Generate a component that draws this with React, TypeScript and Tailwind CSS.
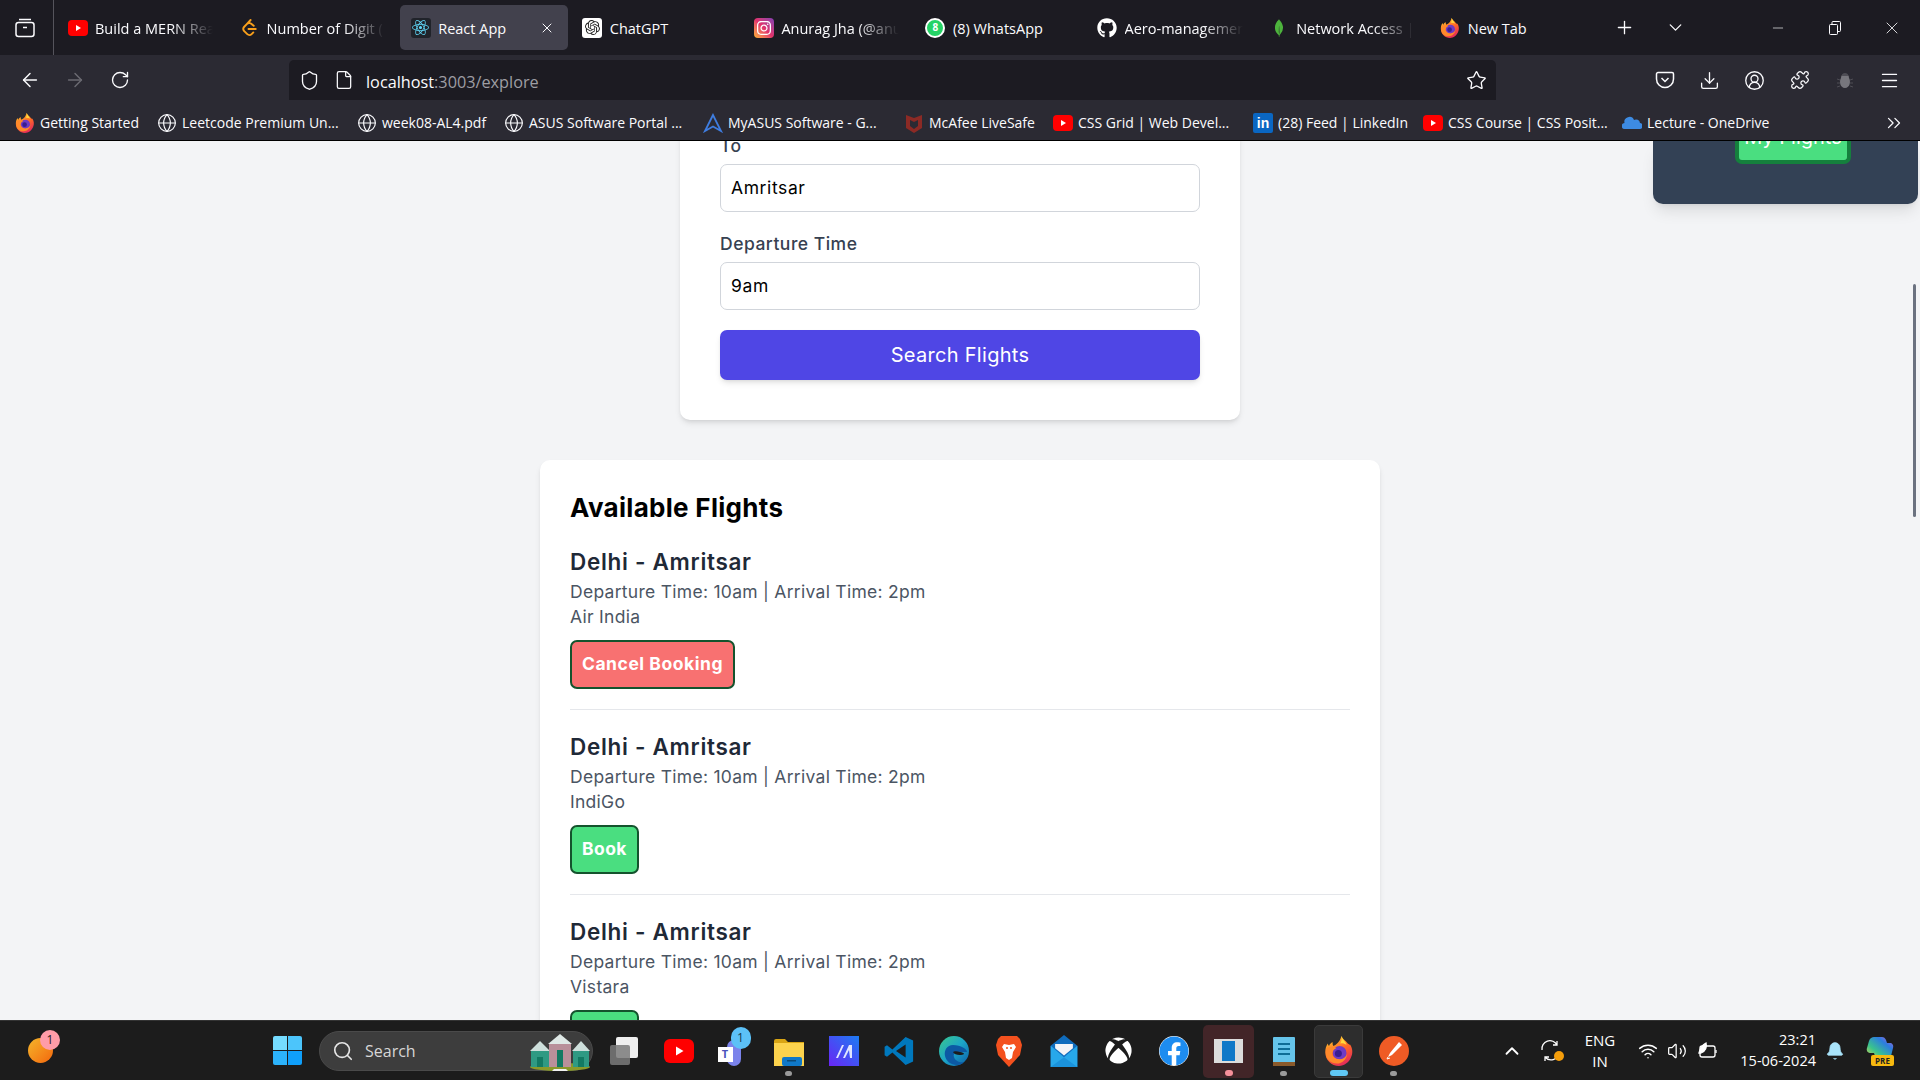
import React from "react";
import { ArrowLeft, ArrowRight, RotateCw, Shield, File, Star, Download, Menu, X, Plus, ChevronDown, Minus, ChevronsRight, Search, ChevronUp, Wifi, Volume2, Bell, Globe, CircleUserRound, Puzzle } from "lucide-react";
import { SiReact, SiOpenai, SiLeetcode, SiMongodb } from "react-icons/si";
import { FaGithub, FaInstagram, FaXbox, FaFacebook } from "react-icons/fa";

const Youtube = ({ w = 20, h = 16 }: { w?: number; h?: number }) => (
  <svg width={w} height={h} viewBox="0 0 20 16"><rect width="20" height="16" rx="4" fill="#ff0000" /><path d="M8 5v6l5-3z" fill="#fff" /></svg>
);
const Firefox = ({ s = 20 }: { s?: number }) => (
  <svg width={s} height={s} viewBox="0 0 24 24">
    <defs>
      <linearGradient id="ffa" x1="0.2" y1="0" x2="0.7" y2="1"><stop offset="0" stopColor="#ffcb2d" /><stop offset="0.5" stopColor="#ff6a26" /><stop offset="1" stopColor="#e3265e" /></linearGradient>
    </defs>
    <path d="M14 0c1 3 3 3 5 6 1 .8 1.5 1 2 1 2 3 2 7 1 9-1.5 5-6 8-10 8-6 0-11-4.700-11-11 0-3 .7-5 2-7 .2 1 .6 1.500 1 2 .5-1.500 2-3 3-3-.2 1-.1 2 .5 3 2-1 5-2.500 6.500-8z" fill="url(#ffa)" />
    <circle cx="12.500" cy="13.500" r="5.500" fill="#6e3bc4" />
    <circle cx="11.500" cy="14" r="2.800" fill="#3a1d91" />
    <path d="M14 0c1 3 3 4 4 7-1.500-1-3.500-1.500-5-1 .8-1.500 1.500-3.500 1-6z" fill="#ffd93b" />
    <path d="M2 10c2-2 5-1 8-.5-2 1-3 2-3.500 4 0 2.500 2 5 6 5 2.500 0 5-1.500 6-4-.5 4-4 7.500-8 7.500-5 0-9-3.500-9-8 0-1.500.2-3 .5-4z" fill="#ff8a2b" />
  </svg>
);
const Glob = () => <Globe size={20} strokeWidth={1.4} className="text-[#fbfbfe]" />;

const Tab = ({ icon, label, active, fade }: { icon: React.ReactNode; label: string; active?: boolean; fade?: boolean }) => (
  <div className={active ? "w-[167.600px] h-[45px] rounded-[5px] bg-[#42414d] flex items-center pl-[10px] pr-[10px] gap-[7px]" : "w-[167.600px] h-[45px] flex items-center pl-[10px] gap-[7px]"}>
    <span className="w-[21px] h-5 flex items-center justify-center shrink-0">{icon}</span>
    <span className={fade ? "w-[118px] mt-[2px] overflow-hidden whitespace-nowrap text-[14.500px] text-[#fbfbfe] [mask-image:linear-gradient(to_right,#000_65%,transparent_100%)]" : "mt-[2px] whitespace-nowrap text-[14.500px] text-[#fbfbfe]"}>{label}</span>
    {active && <X size={16} strokeWidth={1.5} className="ml-auto mr-[3px] text-[#fbfbfe]" />}
  </div>
);

const TabBar = () => (
  <div className="h-[55px] bg-[#1c1b22] flex shrink-0">
    <div className="w-[54px] h-full border-r border-[#55545c] flex items-center justify-center pr-[4px] pt-[1px]">
      <svg width="20" height="20" viewBox="0 0 20 20" fill="none" stroke="#fbfbfe" strokeWidth="1.500"><path d="M4 1.500h12" /><rect x="1" y="4.500" width="18" height="14" rx="2.500" /><path d="M8 9.500h4" /></svg>
    </div>
    <div className="flex gap-1 pt-[5px] pl-[3px]">
      <Tab icon={<Youtube />} label="Build a MERN Real" fade />
      <Tab icon={<SiLeetcode size={17} className="text-[#f89f1b]" />} label="Number of Digit (" fade />
      <Tab icon={<span className="w-5 h-5 rounded-[3px] bg-[#20232a] flex items-center justify-center"><SiReact size={17} className="text-[#61dafb]" /></span>} label="React App" active />
      <Tab icon={<span className="w-5 h-5 rounded-[3px] bg-white flex items-center justify-center"><SiOpenai size={15} className="text-[#222]" /></span>} label="ChatGPT" />
      <Tab icon={<span className="w-5 h-5 rounded-[4px] bg-gradient-to-tr from-[#fdb022] via-[#e1306c] to-[#833ab4] flex items-center justify-center"><FaInstagram size={16} className="text-white" /></span>} label="Anurag Jha (@anurag" fade />
      <Tab icon={<span className="w-5 h-5 rounded-full bg-[#25d366] border-2 border-white flex items-center justify-center text-[10px] font-bold text-white">8</span>} label="(8) WhatsApp" />
      <Tab icon={<FaGithub size={20} className="text-white" />} label="Aero-management" fade />
      <Tab icon={<SiMongodb size={18} className="text-[#4db33d]" />} label="Network Access | Cloud" fade />
      <Tab icon={<Firefox />} label="New Tab" />
    </div>
    <div className="w-[54px] flex items-center justify-center text-[#fbfbfe]"><Plus size={21} strokeWidth={1.5} /></div>
    <div className="w-[48px] flex items-center justify-center text-[#fbfbfe]"><ChevronDown size={21} strokeWidth={1.5} /></div>
    <div className="ml-auto flex text-[#fbfbfe]">
      <div className="w-[57px] flex items-center justify-center"><Minus size={16} strokeWidth={1} /></div>
      <div className="w-[57px] flex items-center justify-center">
        <svg width="12" height="14" viewBox="0 0 12 14" fill="none" stroke="#fbfbfe" strokeWidth="1"><rect x="0.500" y="3.500" width="8" height="10" rx="1" /><path d="M3 3V1.500a1 1 0 0 1 1-1h6.500a1 1 0 0 1 1 1v8a1 1 0 0 1-1 1H8.500" /></svg>
      </div>
      <div className="w-[57px] flex items-center justify-center"><X size={20} strokeWidth={1} /></div>
    </div>
  </div>
);

const NavBtn = ({ children }: { children: React.ReactNode }) => (
  <div className="w-[45px] h-10 flex items-center justify-center text-[#fbfbfe]">{children}</div>
);

const NavBar = () => (
  <div className="h-[45px] bg-[#2b2a33] flex pt-[5px] pl-[7px] shrink-0">
    <NavBtn><ArrowLeft size={22} strokeWidth={1.6} /></NavBtn>
    <NavBtn><ArrowRight size={22} strokeWidth={1.6} className="text-[#6b6a72]" /></NavBtn>
    <NavBtn><RotateCw size={20} strokeWidth={1.6} /></NavBtn>
    <div className="ml-[147px] w-[1207px] h-10 rounded-t-[5px] bg-[#1c1b22] flex items-center text-[#fbfbfe]">
      <Shield size={21} strokeWidth={1.5} className="ml-[10px]" />
      <File size={20} strokeWidth={1.5} className="ml-[14px]" />
      <span className="ml-[12px] text-[16.250px] leading-none mt-[4px]">localhost<span className="text-[#9e9ea4]">:3003/explore</span></span>
      <Star size={21} strokeWidth={1.5} className="ml-auto mr-[9px]" />
    </div>
    <div className="ml-[146px] flex">
      <NavBtn>
        <svg width="20" height="20" viewBox="0 0 20 20" fill="none" stroke="#fbfbfe" strokeWidth="1.500"><path d="M3 2.500h14a1.500 1.500 0 0 1 1.500 1.500v5a8.500 8.500 0 0 1-17 0V4A1.500 1.500 0 0 1 3 2.500z" /><path d="M6.500 8l3.500 3.500L13.500 8" /></svg>
      </NavBtn>
      <NavBtn><Download size={21} strokeWidth={1.5} /></NavBtn>
      <NavBtn><CircleUserRound size={21} strokeWidth={1.5} /></NavBtn>
      <NavBtn><Puzzle size={20} strokeWidth={1.5} /></NavBtn>
      <NavBtn>
        <svg width="18" height="18" viewBox="0 0 18 18"><path d="M5 7a4 4 0 0 1 8 0c2 3 1 10-4 10S3 10 5 7z" fill="#77767d" /><path d="M6 5a3 3 0 0 1 6 0z" fill="#4e4d55" /><path d="M1 8l3 1M1 12h3M1 16l3-1M17 8l-3 1M17 12h-3M17 16l-3-1" stroke="#4e4d55" strokeWidth="1" /></svg>
      </NavBtn>
      <NavBtn><Menu size={21} strokeWidth={1.5} /></NavBtn>
    </div>
  </div>
);

const BM = ({ icon, label, w }: { icon: React.ReactNode; label: string; w: string }) => (
  <div className={`${w} flex items-center gap-[5px] whitespace-nowrap`}>
    <span className="w-5 h-5 flex items-center justify-center shrink-0">{icon}</span>
    <span className="text-[14px] text-[#fbfbfe]">{label}</span>
  </div>
);

const Bookmarks = () => (
  <div className="h-[41px] bg-[#2b2a33] border-b border-black flex items-center pl-[15px] pt-[5px] shrink-0">
    <BM w="w-[142px]" icon={<Firefox />} label="Getting Started" />
    <BM w="w-[200px]" icon={<Glob />} label="Leetcode Premium Un..." />
    <BM w="w-[147px]" icon={<Glob />} label="week08-AL4.pdf" />
    <BM w="w-[199px]" icon={<Glob />} label="ASUS Software Portal ..." />
    <BM w="w-[201px]" icon={<svg width="20" height="20" viewBox="0 0 20 20" fill="none" stroke="#3f7de0" strokeWidth="1.800"><path d="M10 2L2 18l8-4.500L18 18z" /></svg>} label="MyASUS Software - G..." />
    <BM w="w-[149px]" icon={<svg width="18" height="20" viewBox="0 0 18 20"><path d="M1 2l8 3 8-3v13l-8 5-8-5z" fill="#8c2a25" /><path d="M5 7l4 2 4-2v6l-4 3-4-3z" fill="#2b2a33" /></svg>} label="McAfee LiveSafe" />
    <BM w="w-[200px]" icon={<Youtube />} label="CSS Grid | Web Devel..." />
    <BM w="w-[170px]" icon={<span className="w-5 h-5 flex items-center justify-center rounded-[2px] bg-[#0a66c2] text-white text-[14px] font-bold leading-none font-['Liberation_Sans']">in</span>} label="(28) Feed | LinkedIn" />
    <BM w="w-[199px]" icon={<Youtube />} label="CSS Course | CSS Posit..." />
    <BM w="w-[160px]" icon={<svg width="20" height="14" viewBox="0 0 20 14"><path d="M3 13a3 3 0 0 1-.500-6A5 5 0 0 1 12 4a4 4 0 0 1 6 3 3 3 0 0 1-1 6z" fill="#3d8be3" /></svg>} label="Lecture - OneDrive" />
    <div className="ml-auto mr-[6px] w-10 flex justify-center text-[#fbfbfe]"><ChevronsRight size={22} strokeWidth={1.4} /></div>
  </div>
);

const Field = ({ label, value }: { label: string; value: string }) => (
  <div className="mb-5">
    <div className="h-[25px] mb-[5px] text-[17.500px] leading-[25px] font-medium tracking-[0.5px] text-[#374151] -translate-y-px">{label}</div>
    <div className="h-12 rounded-[7px] border border-[#d1d5db] bg-white pl-[10px] flex items-center text-[17.500px] tracking-[0.6px] text-black">{value}</div>
  </div>
);

const Flight = ({ airline, booked, last }: { airline: string; booked?: boolean; last?: boolean }) => (
  <div className={last ? "" : "pb-5 mb-5 border-b border-[#e5e7eb]"}>
    <div className="text-[22.500px] leading-[35px] font-semibold tracking-[0.7px] text-[#1f2937] -translate-y-px">Delhi - Amritsar</div>
    <div className="text-[17.500px] leading-[25px] tracking-[0.28px] text-[#4b5563] -translate-y-px">Departure Time: 10am | Arrival Time: 2pm</div>
    <div className="text-[17.500px] leading-[25px] tracking-[0.28px] text-[#4b5563] -translate-y-px">{airline}</div>
    {booked ? (
      <div className="mt-[10px] w-[165px] h-[49px] rounded-[7px] border-2 border-[#14532d] bg-[#f87171] flex items-center justify-center text-[17.500px] font-bold tracking-[0.55px] text-white">Cancel Booking</div>
    ) : (
      <div className="mt-[10px] w-[69px] h-[49px] rounded-[7px] border-2 border-[#14532d] bg-[#4ade80] flex items-center justify-center text-[17.500px] font-bold tracking-[0.4px] text-white">Book</div>
    )}
  </div>
);

const Page = () => (
  <main className="relative flex-1 min-h-0 overflow-hidden bg-[#f3f4f6] font-['Inter',sans-serif]">
    <div className="flex flex-col items-center -mt-[7px]">
      <div className="w-[560px] bg-white rounded-b-[10px] shadow-md px-10 pb-10">
        <Field label="To" value="Amritsar" />
        <Field label="Departure Time" value="9am" />
        <div className="h-[50px] rounded-[7px] bg-[#4f46e5] shadow-md flex items-center justify-center text-[20px] tracking-[0.3px] text-white">Search Flights</div>
      </div>
      <div className="mt-10 w-[840px] bg-white rounded-[10px] shadow-md p-[30px]">
        <h2 className="text-[26px] leading-[35px] font-bold tracking-[0.3px] text-black mb-5">Available Flights</h2>
        <Flight airline="Air India" booked />
        <Flight airline="IndiGo" />
        <Flight airline="Vistara" last />
      </div>
    </div>
    <div className="absolute top-0 right-[2px] w-[265px] h-[63px] rounded-b-[10px] bg-[#334155] shadow-lg flex justify-end pr-[67px]">
      <div className="w-[116px] h-[23px] rounded-b-[7px] border-x-4 border-b-4 border-[#15803d] bg-[#4ade80] flex items-start justify-center overflow-hidden">
        <span className="text-[20px] leading-[26px] text-white -mt-[17px]">My Flights</span>
      </div>
    </div>
    <div className="absolute right-[4px] top-[143px] w-[3px] h-[233px] rounded-full bg-[#6b7280]" />
  </main>
);

const Slot = ({ children, dot, dotCls }: { children: React.ReactNode; dot?: boolean; dotCls?: string }) => (
  <div className="relative w-[55px] h-full flex items-center justify-center">
    {children}
    {dot && <span className={dotCls ?? "absolute bottom-[4px] w-[7px] h-[5px] rounded-full bg-[#9a9a9a]"} />}
  </div>
);

const Houses = () => (
  <svg width="64" height="40" viewBox="0 0 64 40">
    <ellipse cx="32" cy="36" rx="30" ry="4" fill="#8a9a2a" />
    {[[2, 10, 20], [20, 3, 24], [44, 10, 18]].map(([x, y, w], i) => (
      <g key={i}>
        <path d={`M${x} ${y + 10}L${x + w / 2} ${y}L${x + w} ${y + 10}z`} fill={i === 1 ? "#dfe9e6" : "#cfe0dc"} />
        <rect x={x + 1} y={y + 10} width={w - 2} height={36 - y - 10} fill={i === 1 ? "#b9909a" : "#2f9a83"} />
        <rect x={x + w / 2 - 3} y={y + 16} width="6" height={36 - y - 16} fill="#137a63" />
      </g>
    ))}
    <path d="M26 38h12l2 2H24z" fill="#f2f2f2" />
  </svg>
);

const Taskbar = () => (
  <div className="h-[60px] bg-[#1c1c1c] border-t border-[#333] flex items-center shrink-0 font-['Open_Sans',sans-serif] text-white">
    <div className="relative ml-[28px] w-[25px] h-[25px]">
      <div className="w-[25px] h-[25px] rounded-full bg-gradient-to-br from-[#f3b52a] to-[#f2650c]" />
      <span className="absolute -top-[8px] left-[12px] w-5 h-5 rounded-full bg-[#ff9ca8] text-[#222] text-[12px] flex items-center justify-center">1</span>
    </div>
    <div className="ml-[220px] w-[29px] h-[29px] grid grid-cols-2 gap-[1.500px]">
      <span className="rounded-tl-[2px] bg-[#75dcff]" /><span className="rounded-tr-[2px] bg-[#4cc5fb]" />
      <span className="rounded-bl-[2px] bg-[#2cb3fb]" /><span className="rounded-br-[2px] bg-[#0f9ffa]" />
    </div>
    <div className="ml-[17px] w-[274px] h-10 rounded-full bg-[#3d3d3d] border border-[#4a4a4a] flex items-center">
      <Search size={22} strokeWidth={1.8} className="ml-[12px] text-[#e6e6e6]" />
      <span className="ml-[11px] text-[16px] text-[#d6d6d6]">Search</span>
      <span className="ml-auto"><Houses /></span>
    </div>
    <div className="ml-[3px] flex h-full">
      <Slot>
        <div className="relative w-7 h-7">
          <span className="absolute right-0 top-0 w-[22px] h-[21px] rounded-[2px] bg-[#efefef]" />
          <span className="absolute left-0 bottom-0 w-[20px] h-[20px] rounded-[2px] bg-[#7a7a7a]/85" />
        </div>
      </Slot>
      <Slot><Youtube w={30} h={32} /></Slot>
      <Slot>
        <div className="relative w-[34px] h-[30px]">
          <span className="absolute left-[10px] top-[4px] w-[14px] h-[26px] rounded-full bg-[#7b83eb]" />
          <span className="absolute left-[1px] top-[11px] w-[15px] h-[15px] bg-white text-[#4b53bc] text-[11px] font-bold flex items-center justify-center">T</span>
          <span className="absolute -top-[9px] left-[14px] w-5 h-[22px] rounded-full bg-[#5cc1f7] text-[#173b52] text-[12px] flex items-center justify-center">1</span>
        </div>
      </Slot>
      <Slot dot>
        <svg width="30" height="30" viewBox="0 0 30 30"><path d="M0 5a2 2 0 0 1 2-2h9l3 3h16v3H0z" fill="#d9a514" /><rect y="7" width="30" height="23" fill="#fcd34d" /><rect x="8" y="21" width="20" height="9" rx="2" fill="#0f78c8" /><rect x="13" y="24" width="9" height="1.500" fill="#0b4a78" /></svg>
      </Slot>
      <Slot>
        <svg width="30" height="30" viewBox="0 0 30 30"><defs><linearGradient id="lin" x1="0" y1="1" x2="1" y2="0"><stop offset="0" stopColor="#6a25f5" /><stop offset="1" stopColor="#1c7cf2" /></linearGradient></defs><rect width="30" height="30" fill="url(#lin)" /><path d="M7 22l6-13h2L9 22zM14 22l6-13h3v13h-2l-1-8-4 8z" fill="#dfe5ff" /></svg>
      </Slot>
      <Slot>
        <svg width="30" height="32" viewBox="0 0 100 100"><path d="M72 3l25 12v70L72 97 28 55 10 69 2 64V36l8-5 18 14z" fill="#0078bd" /><path d="M72 28L40 50l32 22z" fill="#1c1c1c" /></svg>
      </Slot>
      <Slot>
        <svg width="30" height="30" viewBox="0 0 30 30"><defs><linearGradient id="edg" x1="0" y1="0" x2="1" y2="1"><stop offset="0" stopColor="#3bc98b" /><stop offset="0.5" stopColor="#1ca5c8" /><stop offset="1" stopColor="#0c5da8" /></linearGradient></defs><circle cx="15" cy="15" r="15" fill="url(#edg)" /><path d="M14 9c-6 0-9 5-8 11 1 5 6 9 12 9 3 0 5-1 7-3-4 1-9-1-10-5-1-3 1-5 4-5h9c0-3-6-7-14-7z" fill="#0c59a4" /><path d="M14 16c1-1 4-1 7 0 2 0 4 1 4 2-3 2-10 1-11-2z" fill="#1c1c1c" /></svg>
      </Slot>
      <Slot>
        <svg width="26" height="32" viewBox="0 0 26 32"><path d="M5 1h16l3 3 2 6-2 10-11 12L2 20 0 10l2-6z" fill="#f4511e" /><path d="M8 9l5 1 5-1 2 3-3 5-1 6-3 2-3-2-1-6-3-5z" fill="#fff" /><path d="M10 13h2M14 13h2" stroke="#f4511e" strokeWidth="1.500" /></svg>
      </Slot>
      <Slot>
        <svg width="30" height="32" viewBox="0 0 30 36"><path d="M15 0L30 12v24H0V12z" fill="#0f6cbd" /><path d="M5 10h20v5l-10 8-10-8z" fill="#f2f4f7" /><path d="M0 12l15 13 15-13v24H0z" fill="#27a8ea" /><path d="M0 36l15-11 15 11z" fill="#1b93dc" /></svg>
      </Slot>
      <Slot><FaXbox size={27} className="text-white" /></Slot>
      <Slot><FaFacebook size={30} className="text-[#1d8cf0] bg-white rounded-full" /></Slot>
      <Slot dot dotCls="absolute bottom-[4px] w-[8px] h-[6px] rounded-full bg-[#f6909a]">
        <span className="absolute inset-x-[2px] top-[4px] bottom-[2px] rounded-[5px] bg-[#422528]" />
        <div className="relative w-[29px] h-[24px] bg-[#dcdcdc] flex justify-center">
          <span className="mt-[2px] w-[13px] h-[20px] bg-[#0f78c8]" />
        </div>
      </Slot>
      <Slot dot>
        <svg width="22" height="30" viewBox="0 0 22 30"><rect y="1" width="22" height="29" fill="#65c4ea" rx="1" /><rect y="26" width="22" height="4" fill="#8a5a2b" /><path d="M5 8h12M5 13h12M5 18h12" stroke="#0e6d96" strokeWidth="2" /></svg>
      </Slot>
      <Slot dot dotCls="absolute bottom-[4px] w-[18px] h-[6px] rounded-full bg-[#5fc8f5]">
        <span className="absolute inset-x-[3px] top-[4px] bottom-[2px] rounded-[5px] bg-[#2d2d2d] border border-[#3a3a3a]" />
        <span className="relative"><Firefox s={30} /></span>
      </Slot>
      <Slot dot>
        <svg width="30" height="30" viewBox="0 0 30 30"><circle cx="15" cy="15" r="15" fill="#ef5b25" /><path d="M20 6l3 3-10 10-4 2 2-4z" fill="#fff" /><path d="M9 21l-1 2 3-1" stroke="#fff" strokeWidth="1" fill="none" /></svg>
      </Slot>
    </div>
    <ChevronUp size={22} strokeWidth={2} className="ml-[80px] text-white" />
    <div className="ml-[17px] w-6 h-6 relative">
      <svg width="22" height="24" viewBox="0 0 22 24" fill="none" stroke="#fff" strokeWidth="1.300"><path d="M2 11a8 8 0 0 1 15-5M17 2v4h-4M19 14a8 8 0 0 1-14 4M5 22v-4h4" /></svg>
      <span className="absolute right-0 bottom-[2px] w-[10px] h-[10px] rounded-full bg-[#f59e0b]" />
    </div>
    <div className="ml-[17px] w-[38px] flex flex-col items-center text-[15px] leading-[20.500px]"><span>ENG</span><span>IN</span></div>
    <Wifi size={20} strokeWidth={1.8} className="ml-[19px]" />
    <Volume2 size={20} strokeWidth={1.5} className="ml-[9px]" />
    <svg width="22" height="20" viewBox="0 0 22 20" fill="none" stroke="#fff" strokeWidth="1.300" className="ml-[10px]"><rect x="3" y="5" width="15" height="11" rx="2" /><path d="M19 9v3" /><path d="M2 12c1-5 3-8 7-10 1 4 0 8-5 10z" fill="#fff" /></svg>
    <div className="ml-[9px] w-[88px] flex flex-col items-end text-[14.500px] leading-[20.500px]"><span>23:21</span><span>15-06-2024</span></div>
    <Bell size={20} strokeWidth={1} className="ml-[9px] text-[#a9e4fb]" fill="#a9e4fb" />
    <div className="relative ml-[21px] w-[28px] h-[30px]">
      <svg width="28" height="24" viewBox="0 0 28 24"><defs><linearGradient id="cop" x1="0" y1="1" x2="1" y2="0"><stop offset="0" stopColor="#e8d44a" /><stop offset="0.35" stopColor="#3ac48c" /><stop offset="0.7" stopColor="#2c7de0" /><stop offset="1" stopColor="#c45fd6" /></linearGradient></defs><path d="M8 1h8c2 0 3 1 4 3l1 3h3c2 0 4 2 3 5l-2 8c-.5 2-2 3-4 3h-8c-2 0-3-1-4-3l-1-3H5c-3 0-5-2-4-5l2-7c1-3 3-4 5-4z" fill="url(#cop)" /></svg>
      <span className="absolute bottom-0 left-[5px] w-[23px] h-[11px] rounded-[2px] bg-[#f7b90f] text-[#222] text-[8px] leading-[11px] font-bold text-center">PRE</span>
    </div>
  </div>
);

export default function App() {
  return (
    <div className="w-[1920px] h-screen overflow-hidden flex flex-col font-['Open_Sans',sans-serif]">
      <TabBar />
      <NavBar />
      <Bookmarks />
      <Page />
      <Taskbar />
    </div>
  );
}
